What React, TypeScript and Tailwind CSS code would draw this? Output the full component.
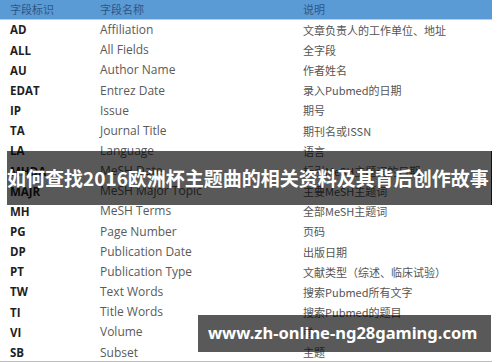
const rows: [string, string, string][] = [
  ['AD', 'Affiliation', '文章负责人的工作单位、地址'],
  ['ALL', 'All Fields', '全字段'],
  ['AU', 'Author Name', '作者姓名'],
  ['EDAT', 'Entrez Date', '录入Pubmed的日期'],
  ['IP', 'Issue', '期号'],
  ['TA', 'Journal Title', '期刊名或ISSN'],
  ['LA', 'Language', '语言'],
  ['MHDA', 'MeSH Date', '标引MeSH主题词的日期'],
  ['MAJR', 'MeSH Major Topic', '主要MeSH主题词'],
  ['MH', 'MeSH Terms', '全部MeSH主题词'],
  ['PG', 'Page Number', '页码'],
  ['DP', 'Publication Date', '出版日期'],
  ['PT', 'Publication Type', '文献类型（综述、临床试验）'],
  ['TW', 'Text Words', '搜索Pubmed所有文字'],
  ['TI', 'Title Words', '搜索Pubmed的题目'],
  ['VI', 'Volume', '卷'],
  ['SB', 'Subset', '主题'],
];

export default function App() {
  return (
    <div className="relative w-[500px] h-[362px] overflow-hidden bg-white font-['Open_Sans','Noto_Sans_CJK_SC',sans-serif]">
      <div className="w-[492px]">
        {/* header */}
        <div className="flex h-[20px] items-end bg-[#5b9bd5] border-b border-[#b7d2ee] pb-[2px] text-[11px] text-[#2e5586] font-['Noto_Sans_CJK_SC',sans-serif]">
          <div className="w-[100px] pl-[10px]">字段标识</div>
          <div className="w-[203px]">字段名称</div>
          <div className="flex-1">说明</div>
        </div>

        {rows.map(([tag, name, desc]) => (
          <div key={tag} className="flex h-[20.17px] items-center">
            <div className="w-[100px] pl-[10px] text-[11.5px] font-bold text-[#1e1e1e]">{tag}</div>
            <div className="w-[203px] text-[12px] text-[#5a5a5a]">{name}</div>
            <div className="flex-1 text-[11px] text-[#555] font-['Noto_Sans_CJK_SC',sans-serif]">{desc}</div>
          </div>
        ))}
      </div>
      <div className="absolute left-0 bottom-0 w-[492px] h-px bg-[#bdbdbd]" />

      {/* title overlay */}
      <div className="absolute left-[7px] top-[151px] w-[485px] h-[54px] flex items-center bg-[rgba(0,0,0,0.65)] border-r border-[#111]">
        <span className="whitespace-nowrap text-[19px] font-bold text-white font-['Noto_Sans_CJK_SC',sans-serif]">
          如何查找2016欧洲杯主题曲的相关资料及其背后创作故事
        </span>
      </div>

      {/* url overlay */}
      <div className="absolute left-[198px] top-[315px] w-[293px] h-[37px] flex items-center pl-[10px] bg-[rgba(0,0,0,0.65)]">
        <span className="whitespace-nowrap text-[16.5px] font-bold text-white font-['Noto_Sans',sans-serif]">
          www.zh-online-ng28gaming.com
        </span>
      </div>
    </div>
  );
}
